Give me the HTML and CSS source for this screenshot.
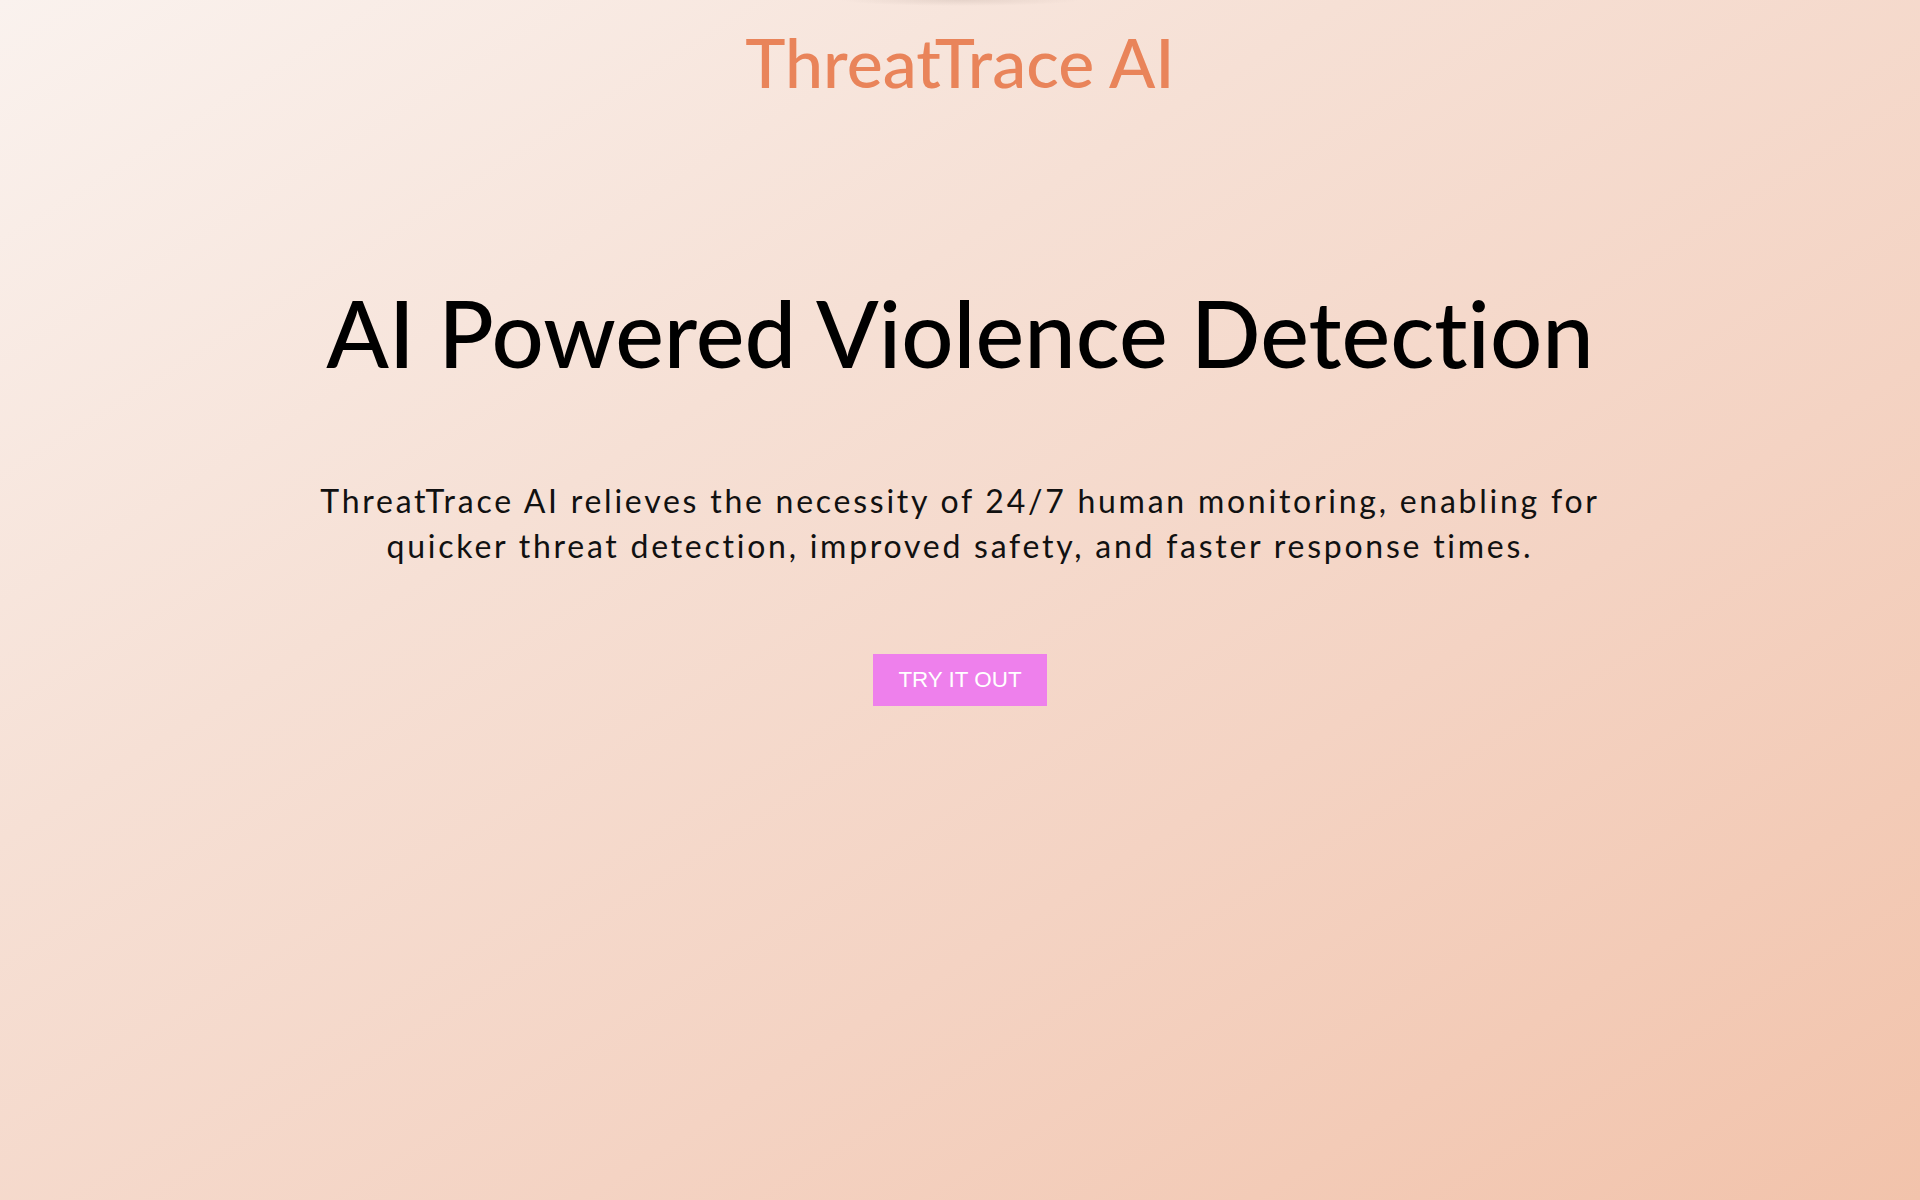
FILE: index.html
```html
<!DOCTYPE html>
<html lang="en">
<head>
<meta charset="utf-8">
<title>ThreatTrace AI</title>
<link rel="stylesheet" href="styles.css">
</head>
<body>
<div class="page">
  <header class="top">
    <h1 class="brand">ThreatTrace AI</h1>
  </header>
  <main class="hero">
    <h2 class="headline">AI Powered Violence Detection</h2>
    <p class="lead">ThreatTrace AI relieves the necessity of 24/7 human monitoring, enabling for quicker threat detection, improved safety, and faster response times.</p>
    <button class="cta">TRY IT OUT</button>
  </main>
</div>
</body>
</html>
```

FILE: styles.css
```css
html, body {
  margin: 0;
  padding: 0;
  height: 100%;
}

body {
  font-family: "Lato", "Noto Sans", sans-serif;
  font-variant-ligatures: none;
  background: linear-gradient(to bottom right, #faf2ee 0%, #f6e0d5 35%, #f4d3c3 65%, #f2c3ab 100%);
  color: #000;
}

.page {
  min-height: 100vh;
  display: flex;
  flex-direction: column;
  align-items: center;
  background: radial-gradient(ellipse 120px 6px at 50% 0, rgba(150, 130, 120, 0.18), rgba(150, 130, 120, 0) 100%);
}

.top {
  display: flex;
  justify-content: center;
  padding-top: 21px;
}

.brand {
  margin: 0;
  font-size: 68px;
  font-weight: 500;
  line-height: 1.2;
  color: #e9845a;
  letter-spacing: 0;
}

.hero {
  display: flex;
  flex-direction: column;
  align-items: center;
  text-align: center;
  padding-top: 175px;
}

.headline {
  margin: 0;
  font-size: 92px;
  font-weight: 500;
  line-height: 1.2;
}

.lead {
  margin: 90px 0 0;
  width: 1290px;
  font-size: 32px;
  line-height: 45px;
  font-weight: 400;
  letter-spacing: 2.75px;
  color: #111;
}

.cta {
  margin-top: 86px;
  border: none;
  background: #ee80ec;
  color: #fff;
  font-family: "Liberation Sans", Arial, sans-serif;
  font-size: 22.4px;
  padding: 12.8px 25.6px;
  cursor: pointer;
}
```
